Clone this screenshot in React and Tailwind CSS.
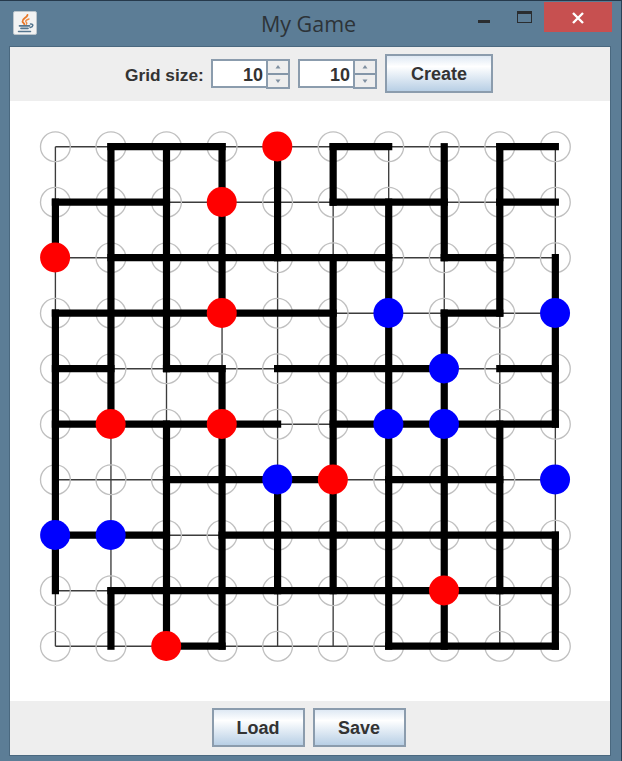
import React from "react";

const RED = "#ff0000";
const BLUE = "#0000ff";

// Thick horizontal runs: [row, first column, last column]
const H = [
  [0, 1, 3], [0, 5, 6], [0, 8, 9],
  [1, 0, 2], [1, 5, 7], [1, 8, 9],
  [2, 1, 6], [2, 7, 8],
  [3, 0, 5], [3, 7, 8],
  [4, 0, 1], [4, 2, 3], [4, 4, 7], [4, 8, 9],
  [5, 0, 4], [5, 5, 9],
  [6, 2, 5], [6, 6, 8],
  [7, 0, 2], [7, 3, 9],
  [8, 1, 9],
  [9, 2, 3], [9, 6, 9],
];

// Thick vertical runs: [column, first row, last row]
const V = [
  [0, 1, 2], [0, 3, 8],
  [1, 0, 5], [1, 8, 9],
  [2, 0, 4], [2, 5, 9],
  [3, 0, 3], [3, 4, 9],
  [4, 0, 2], [4, 6, 8],
  [5, 0, 1], [5, 2, 8],
  [6, 1, 9],
  [7, 0, 2], [7, 3, 9],
  [8, 0, 3], [8, 5, 8],
  [9, 2, 5], [9, 7, 9],
];

// Stones: [column, row, colour]
const STONES = [
  [4, 0, RED], [3, 1, RED], [0, 2, RED], [3, 3, RED], [1, 5, RED],
  [3, 5, RED], [5, 6, RED], [7, 8, RED], [2, 9, RED],
  [6, 3, BLUE], [9, 3, BLUE], [7, 4, BLUE], [6, 5, BLUE], [7, 5, BLUE],
  [4, 6, BLUE], [9, 6, BLUE], [0, 7, BLUE], [1, 7, BLUE],
];

const N = [0, 1, 2, 3, 4, 5, 6, 7, 8, 9];
const px = (i) => 45.4 + i * 55.55;
const py = (i) => 45.7 + i * 55.5;
const hasStone = (c, r) => STONES.some(([sc, sr]) => sc === c && sr === r);

function Board() {
  return (
    <svg width="600" height="600" viewBox="0 0 600 600" className="block">
      <g stroke="#3c3c3c" strokeWidth="1.35">
        {N.map((i) => (
          <line key={"h" + i} x1={px(0)} x2={px(9)} y1={py(i)} y2={py(i)} />
        ))}
        {N.map((i) => (
          <line key={"v" + i} y1={py(0)} y2={py(9)} x1={px(i)} x2={px(i)} />
        ))}
      </g>
      <g fill="none" stroke="#c0c0c0" strokeWidth="1.35">
        {N.map((r) =>
          N.filter((c) => !hasStone(c, r)).map((c) => (
            <circle key={r + "-" + c} cx={px(c)} cy={py(r)} r="14.9" />
          ))
        )}
      </g>
      <g stroke="#000" strokeWidth="7.2" strokeLinecap="square">
        {H.map(([r, a, b]) => (
          <line key={"h" + r + a} x1={px(a)} x2={px(b)} y1={py(r)} y2={py(r)} />
        ))}
        {V.map(([c, a, b]) => (
          <line key={"v" + c + a} x1={px(c)} x2={px(c)} y1={py(a)} y2={py(b)} />
        ))}
      </g>
      {STONES.map(([c, r, fill]) => (
        <circle key={c + "s" + r} cx={px(c) - 0.3} cy={py(r) - 0.2} r="15" fill={fill} />
      ))}
    </svg>
  );
}

function SwingButton({ children, className }) {
  return (
    <button
      className={`h-[39px] border-2 border-[#8b9cad] bg-linear-to-b from-[#dfe9f4] via-white via-30% to-[#b8cfe5] pt-[2px] text-[18px] font-bold text-[#333] ${className}`}
    >
      {children}
    </button>
  );
}

function Arrow({ down }) {
  return (
    <svg width="6" height="4" viewBox="0 0 6 4">
      <path d={down ? "M0.5 0.5H5.5L3 4Z" : "M0.5 3.5H5.5L3 0Z"} fill="#7f8fa0" />
    </svg>
  );
}

function Spinner() {
  return (
    <div className="flex h-[30px] w-[79px]">
      <div className="flex h-[29px] w-[55px] items-center justify-end border-2 border-r-0 border-[#8b9cad] bg-white pr-[3px] pt-[3px] text-[18px]">
        10
      </div>
      <div className="flex w-6 flex-col border-2 border-[#8b9cad]">
        <div className="flex h-[12px] items-center justify-center">
          <Arrow />
        </div>
        <div className="h-[2px] bg-[#8496a8]" />
        <div className="flex h-[12px] items-center justify-center">
          <Arrow down />
        </div>
      </div>
    </div>
  );
}

function JavaIcon() {
  return (
    <svg width="24" height="24" viewBox="0 0 24 24" className="block">
      <rect x="0.5" y="0.5" width="23" height="23" rx="1.5" fill="#f3f3f3" stroke="#bcc5cc" />
      <g fill="none" strokeLinecap="round">
        <path d="M14.500 4C14 7 9 7.500 9.500 10.500C9.700 11.800 11 12 11.300 13.200" stroke="#e8782a" strokeWidth="1.8" />
        <path d="M16 8C12.500 9 12 10.300 13.600 11.700C14 12.300 13.800 12.900 13.200 13.400" stroke="#ee8b43" strokeWidth="1.4" />
        <path d="M6.500 14.800H16.500M8 17.300H15" stroke="#54758e" strokeWidth="1.7" />
        <path d="M17.500 13C20.800 12.600 20.500 15.800 17.200 16.600" stroke="#54758e" strokeWidth="1.5" />
        <path d="M5.500 20.600H17.500" stroke="#54758e" strokeWidth="1.5" />
      </g>
    </svg>
  );
}

export default function App() {
  return (
    <div className="flex h-[761px] w-[622px] flex-col overflow-hidden border-r border-t border-r-[#2b4257] border-t-[#26394b] bg-[#5c7d96] font-['Liberation_Sans',Arial,sans-serif]">
      <header className="flex h-[45px] shrink-0 items-start">
        <div className="w-[230px] pl-[13px] pt-[10px]">
          <JavaIcon />
        </div>
        <h1 className="w-[157px] pt-[6px] text-center font-['Open_Sans',sans-serif] text-[21.500px] leading-[33px] whitespace-nowrap text-[#2d3338]">
          My Game
        </h1>
        <div className="flex flex-1 pl-[91px]">
          <div className="mt-[19px] h-[3px] w-[12px] bg-[#2a2d30]" />
          <div className="ml-[27px] mt-[10px] h-[12px] w-[15px] border border-t-[3px] border-[#2a2d30]" />
        </div>
        <div className="mr-[9px] mt-px flex h-[30px] w-[68px] items-center justify-center bg-[#c75050] pt-px">
          <svg width="12" height="12" viewBox="0 0 12 12">
            <path d="M1 1L11 11M11 1L1 11" stroke="#fff" strokeWidth="2.400" />
          </svg>
        </div>
      </header>
      <main className="ml-[9px] flex h-[710px] w-[602px] shrink-0 flex-col border border-[#4a687f] bg-[#eeeeee]">
        <div className="flex h-[54px] shrink-0 items-center pl-[115px] text-[18px] font-bold text-[#333]">
          <span className="w-[86px] whitespace-nowrap pt-[3px] text-[17.300px]">Grid size:</span>
          <Spinner />
          <div className="w-2" />
          <Spinner />
          <SwingButton className="mb-px ml-2 w-[108px]">Create</SwingButton>
        </div>
        <div className="h-[600px] shrink-0 bg-white">
          <Board />
        </div>
        <div className="flex min-h-0 flex-1 items-center justify-center gap-2 pr-[3px] pb-px">
          <SwingButton className="w-[93px]">Load</SwingButton>
          <SwingButton className="w-[93px]">Save</SwingButton>
        </div>
      </main>
    </div>
  );
}
